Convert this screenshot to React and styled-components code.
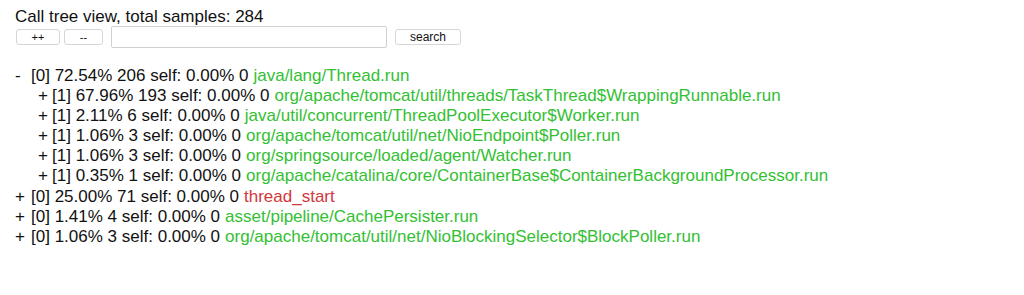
import React from 'react';
import styled, { createGlobalStyle } from 'styled-components';

const GlobalStyle = createGlobalStyle`
  body {
    margin: 0;
    background: #fff;
    font-family: "Liberation Sans", Arial, sans-serif;
    color: #111;
  }
`

const Page = styled.div`
  padding: 8px 15px;
`
const Title = styled.div`
  font-size: 17px;
  line-height: 18px;
`
const Toolbar = styled.div`
  display: flex;
  align-items: center;
  height: 22px;
  margin-left: 1px;
`
const Button = styled.button`
  width: ${props => props.w}px;
  height: 16px;
  margin-right: ${props => props.gap || 0}px;
  padding: 0;
  background: #fff;
  border: 1px solid #d6d6d6;
  border-radius: 3px;
  font-family: "Liberation Sans", Arial, sans-serif;
  font-size: ${props => props.fs || 12}px;
  line-height: 14px;
  color: #111;
`
const SearchInput = styled.input`
  width: 276px;
  height: 22px;
  box-sizing: border-box;
  border: 1px solid #d0d0d0;
  border-radius: 2px;
  margin-right: 8px;
  padding: 0 4px;
`
const Tree = styled.div`
  margin-top: 18px;
  font-size: 17px;
  line-height: 20.1px;
`
const Row = styled.div`
  display: flex;
  white-space: nowrap;
  padding-left: ${props => props.depth * 23}px;
`
const Toggle = styled.span`
  display: inline-block;
  width: ${props => props.depth > 0 ? 14 : 16}px;
`
const Name = styled.span`
  color: ${props => props.red ? '#d2373c' : '#33c033'};
  margin-left: 5px;
`

const rows = [
  { d: 0, t: '-', idx: 0, pct: '72.54%', n: 206, name: 'java/lang/Thread.run' },
  { d: 1, t: '+', idx: 1, pct: '67.96%', n: 193, name: 'org/apache/tomcat/util/threads/TaskThread$WrappingRunnable.run' },
  { d: 1, t: '+', idx: 1, pct: '2.11%', n: 6, name: 'java/util/concurrent/ThreadPoolExecutor$Worker.run' },
  { d: 1, t: '+', idx: 1, pct: '1.06%', n: 3, name: 'org/apache/tomcat/util/net/NioEndpoint$Poller.run' },
  { d: 1, t: '+', idx: 1, pct: '1.06%', n: 3, name: 'org/springsource/loaded/agent/Watcher.run' },
  { d: 1, t: '+', idx: 1, pct: '0.35%', n: 1, name: 'org/apache/catalina/core/ContainerBase$ContainerBackgroundProcessor.run' },
  { d: 0, t: '+', idx: 0, pct: '25.00%', n: 71, name: 'thread_start', red: true },
  { d: 0, t: '+', idx: 0, pct: '1.41%', n: 4, name: 'asset/pipeline/CachePersister.run' },
  { d: 0, t: '+', idx: 0, pct: '1.06%', n: 3, name: 'org/apache/tomcat/util/net/NioBlockingSelector$BlockPoller.run' },
]

const App = () => {
  return (
    <Page>
      <GlobalStyle />
      <Title>Call tree view, total samples: 284</Title>
      <Toolbar>
        <Button w={44} gap={4} fs={11}>++</Button>
        <Button w={39} gap={8} fs={11}>--</Button>
        <SearchInput />
        <Button w={66}>search</Button>
      </Toolbar>
      <Tree>
        {rows.map((r, i) => (
          <Row key={i} depth={r.d}>
            <Toggle depth={r.d}>{r.t}</Toggle>
            <span>[{r.idx}] {r.pct} {r.n} self: 0.00% 0</span>
            <Name red={r.red}>{r.name}</Name>
          </Row>
        ))}
      </Tree>
    </Page>
  );
}

export default App;
